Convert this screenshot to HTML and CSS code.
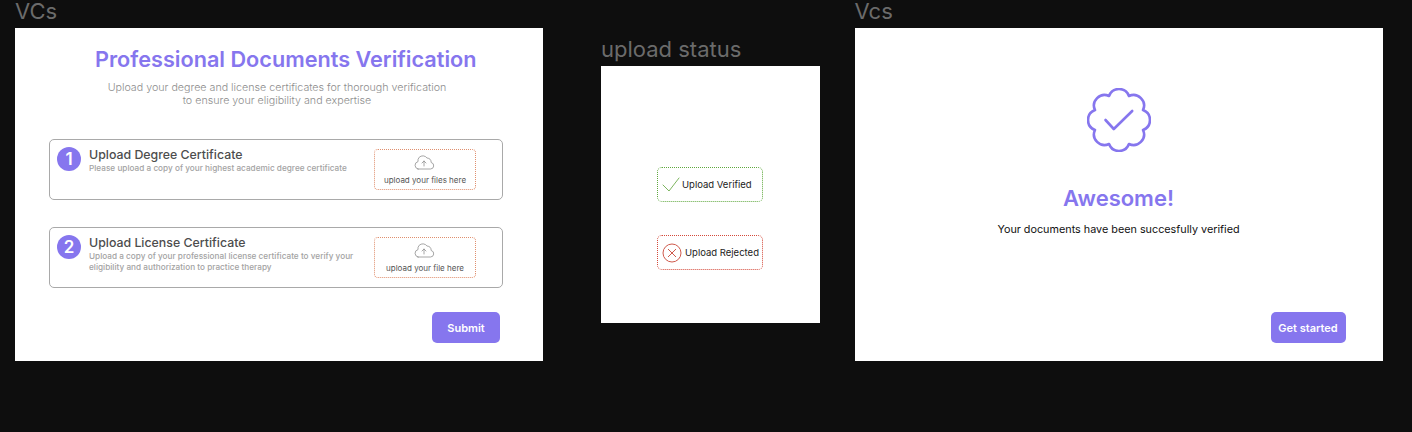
FILE: index.html
```html
<!DOCTYPE html>
<html lang="en">
<head>
<meta charset="utf-8">
<title>VCs</title>
<link rel="stylesheet" href="styles.css">
</head>
<body>
<main class="canvas">
  <section class="column column-docs">
    <h2 class="frame-label">VCs</h2>
    <div class="frame frame-wide docs">
      <h1 class="docs-title">Professional Documents Verification</h1>
      <p class="docs-sub">Upload your degree and license certificates for thorough verification<br>to ensure your eligibility and expertise</p>
      <div class="card card-first">
        <span class="step">1</span>
        <div class="card-text">
          <h3 class="card-title">Upload Degree Certificate</h3>
          <p class="card-desc">Please upload a copy of your highest academic degree certificate</p>
        </div>
        <div class="drop">
          <svg class="cloud" viewBox="0 0 22 15" width="22" height="15" fill="none" stroke="#8f8f8f" stroke-width="0.8" stroke-linecap="round" stroke-linejoin="round"><path d="M5 14h12.5a3.3 3.3 0 0 0 .7-6.5A4.6 4.6 0 0 0 14 3 5.2 5.2 0 0 0 6.2 2.3 5 5 0 0 0 5 6.6 3.8 3.8 0 0 0 5 14Z"/><path d="M11 11V6M9 8l2-2 2 2"/></svg>
          <span class="drop-text">upload your files here</span>
        </div>
      </div>
      <div class="card card-second">
        <span class="step">2</span>
        <div class="card-text">
          <h3 class="card-title">Upload License Certificate</h3>
          <p class="card-desc">Upload a copy of your professional license certificate to verify your<br>eligibility and authorization to practice therapy</p>
        </div>
        <div class="drop">
          <svg class="cloud" viewBox="0 0 22 15" width="22" height="15" fill="none" stroke="#8f8f8f" stroke-width="0.8" stroke-linecap="round" stroke-linejoin="round"><path d="M5 14h12.5a3.3 3.3 0 0 0 .7-6.5A4.6 4.6 0 0 0 14 3 5.2 5.2 0 0 0 6.2 2.3 5 5 0 0 0 5 6.6 3.8 3.8 0 0 0 5 14Z"/><path d="M11 11V6M9 8l2-2 2 2"/></svg>
          <span class="drop-text">upload your file here</span>
        </div>
      </div>
      <div class="actions actions-docs"><button class="btn btn-submit" type="button">Submit</button></div>
    </div>
  </section>

  <section class="column column-status">
    <h2 class="frame-label">upload status</h2>
    <div class="frame frame-status">
      <div class="status status-ok">
        <svg class="status-check" viewBox="0 0 18 15" width="18" height="15" fill="none" stroke="#7db55f" stroke-width="1" stroke-linecap="round" stroke-linejoin="round"><path d="M1 8l6 6L17 1"/></svg>
        <span>Upload Verified</span>
      </div>
      <div class="status status-bad">
        <svg viewBox="0 0 20 20" width="20" height="20" fill="none" stroke="#cf5a4c" stroke-width="1"><circle cx="10" cy="10" r="9"/><path d="M6 6l8 8M14 6l-8 8"/></svg>
        <span>Upload Rejected</span>
      </div>
    </div>
  </section>

  <section class="column column-done">
    <h2 class="frame-label">Vcs</h2>
    <div class="frame frame-wide done">
      <svg class="badge" viewBox="0 0 64 64" width="64" height="64" fill="none" stroke="#8676ee" stroke-width="2.6" stroke-linecap="round" stroke-linejoin="round">
        <path d="M22.05 7.98A10.6 10.6 0 0 1 41.95 7.98A10.6 10.6 0 0 1 56.02 22.05A10.6 10.6 0 0 1 56.02 41.95A10.6 10.6 0 0 1 41.95 56.02A10.6 10.6 0 0 1 22.05 56.02A10.6 10.6 0 0 1 7.98 41.95A10.6 10.6 0 0 1 7.98 22.05A10.6 10.6 0 0 1 22.05 7.98Z"/>
        <path d="M18.5 32l8.3 9L45.2 23"/>
      </svg>
      <h1 class="done-title">Awesome!</h1>
      <p class="done-sub">Your documents have been succesfully verified</p>
      <div class="actions actions-done"><button class="btn btn-start" type="button">Get started</button></div>
    </div>
  </section>
</main>
</body>
</html>
```

FILE: styles.css
```css
* { box-sizing: border-box; }
html, body { margin: 0; padding: 0; }
body {
  width: 1412px;
  height: 432px;
  overflow: hidden;
  background: #0e0e0e;
  font-family: Inter, "Liberation Sans", sans-serif;
}
h1, h2, h3, p { margin: 0; }

.canvas { display: flex; align-items: flex-start; padding-left: 15px; }
.column { display: flex; flex-direction: column; }
.column-status { margin-left: 58px; padding-top: 38px; }
.column-done { margin-left: 34.5px; }

.frame-label {
  height: 28px;
  font-size: 22px;
  line-height: 22px;
  font-weight: 400;
  color: #6b6b6b;
}
.frame { background: #fff; }
.frame-wide { width: 528px; height: 333px; }

.docs { padding: 19px 40px 0 34px; display: flex; flex-direction: column; }
.docs-title {
  margin-left: 46px;
  width: 381px;
  font-size: 21.66px;
  line-height: 24px;
  font-weight: 600;
  color: #8676ee;
  white-space: nowrap;
}
.docs-sub {
  margin-top: 10px;
  margin-left: 58px;
  width: 340px;
  text-align: center;
  font-size: 10.7px;
  line-height: 13px;
  font-weight: 300;
  color: #8d8d8d;
  white-space: nowrap;
}
.card {
  width: 454px;
  height: 61px;
  border: 1px solid #a9a9a9;
  border-radius: 5px;
  padding: 7px 26px 0 7px;
  display: flex;
  align-items: flex-start;
}
.card-first { margin-top: 32px; }
.card-second { margin-top: 27px; }
.step {
  flex: none;
  width: 24px;
  height: 24px;
  border-radius: 50%;
  background: #8676ee;
  color: #fff;
  font-size: 17px;
  line-height: 24px;
  font-weight: 600;
  text-align: center;
}
.card-text { flex: 1; margin-left: 8px; }
.card-title {
  font-size: 12.35px;
  line-height: 15px;
  font-weight: 500;
  color: #4d4d4d;
  white-space: nowrap;
}
.card-desc {
  margin-top: 1px;
  font-size: 8.2px;
  letter-spacing: 0.02px;
  line-height: 10.5px;
  font-weight: 500;
  color: #a3a3a3;
  white-space: nowrap;
}
.drop {
  flex: none;
  width: 102px;
  height: 41px;
  margin-top: 2px;
  border: 1px dotted #e08f6e;
  border-radius: 4px;
  display: flex;
  flex-direction: column;
  align-items: center;
  padding-top: 5px;
}
.cloud { margin-left: -2px; }
.drop-text {
  margin-top: 5px;
  font-size: 8px;
  line-height: 10px;
  color: #555;
  white-space: nowrap;
}

.actions { display: flex; justify-content: flex-end; }
.actions-docs { width: 451px; margin-top: 24px; }
.btn {
  border: 0;
  padding: 0;
  height: 31px;
  border-radius: 5px;
  background: #8676ee;
  color: #fff;
  font-family: inherit;
  font-size: 11px;
  font-weight: 600;
}
.btn-submit { width: 68px; }
.btn-start { width: 75px; }

.frame-status {
  width: 219px;
  height: 257px;
  padding: 101px 0 0 56px;
  display: flex;
  flex-direction: column;
  gap: 33px;
}
.status {
  width: 106px;
  height: 35px;
  border: 1px dotted;
  border-radius: 5px;
  display: flex;
  align-items: center;
  font-size: 9.5px;
  color: #222;
  white-space: nowrap;
}
.status-ok { border-color: #5fa83e; padding-left: 4px; gap: 2px; }
.status-bad { border-color: #d4493a; padding-left: 4px; gap: 3px; }

.done { display: flex; flex-direction: column; align-items: center; padding-top: 60px; }
.badge { flex: none; }
.done-title {
  margin-top: 32px;
  font-size: 22px;
  line-height: 28px;
  font-weight: 600;
  color: #8676ee;
}
.done-sub {
  margin-top: 11px;
  font-size: 10.8px;
  line-height: 14px;
  color: #111;
  white-space: nowrap;
}
.actions-done { align-self: stretch; padding-right: 37px; margin-top: 75px; }
```
